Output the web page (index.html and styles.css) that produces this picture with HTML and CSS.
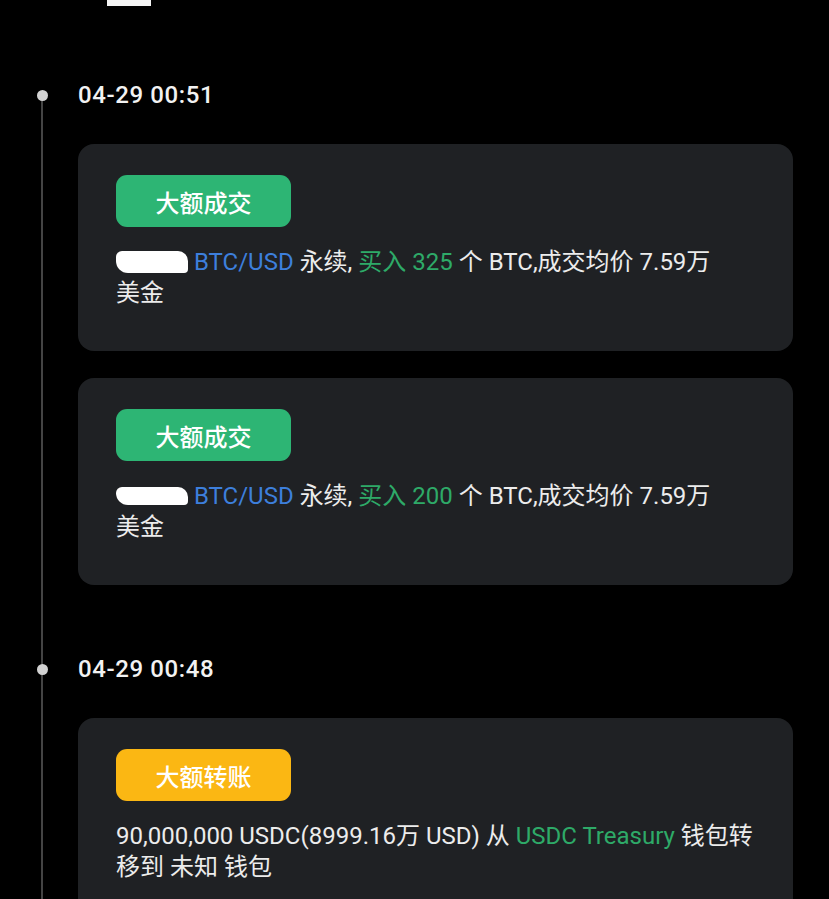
FILE: index.html
```html
<!DOCTYPE html>
<html lang="zh-CN">
<head>
<meta charset="utf-8">
<title>动态</title>
<link rel="stylesheet" href="styles.css">
</head>
<body>
<div class="tab-indicator"></div>
<div class="timeline">
  <section class="group">
    <div class="time-row"><span class="dot"></span><span class="time">04-29 00:51</span></div>
    <div class="card">
      <div class="badge badge-green">大额成交</div>
      <p class="msg"><span class="redact"></span> <span class="blue">BTC/USD</span> 永续, <span class="green">买入 325</span> 个 BTC,成交均价 7.59万 <span class="nowrap">美金</span></p>
    </div>
    <div class="card">
      <div class="badge badge-green">大额成交</div>
      <p class="msg"><span class="redact redact-b"></span> <span class="blue">BTC/USD</span> 永续, <span class="green">买入 200</span> 个 BTC,成交均价 7.59万 <span class="nowrap">美金</span></p>
    </div>
  </section>
  <section class="group">
    <div class="time-row"><span class="dot"></span><span class="time">04-29 00:48</span></div>
    <div class="card">
      <div class="badge badge-yellow">大额转账</div>
      <p class="msg">90,000,000 USDC(8999.16万 USD) 从 <span class="green">USDC Treasury</span> 钱包转移到 未知 钱包</p>
    </div>
  </section>
</div>
</body>
</html>
```
FILE: styles.css
```css
* { box-sizing: border-box; }
html, body { margin: 0; padding: 0; }
body {
  background: #000;
  color: #ececec;
  font-family: Roboto, "Noto Sans CJK SC", sans-serif;
  height: 899px;
  overflow: hidden;
}
.tab-indicator {
  width: 44px;
  height: 6px;
  margin-left: 107px;
  background: #f4f4f4;
}
.timeline {
  margin-top: 74px;
  background: linear-gradient(#444, #444) no-repeat 41px 15px / 2px 100%;
}
.group { padding-bottom: 69px; }
.time-row {
  display: flex;
  align-items: center;
  height: 30px;
}
.dot {
  width: 11px;
  height: 11px;
  border-radius: 50%;
  background: #d2d2d2;
  margin-left: 37px;
  margin-right: 30px;
  flex: none;
}
.time {
  font-size: 24px;
  font-weight: 500;
  color: #f2f2f2;
  letter-spacing: 0.6px;
}
.card {
  margin: 34px 36px 0 78px;
  background: #1f2124;
  border-radius: 16px;
  padding: 31px 38px 42px;
}
.card + .card { margin-top: 27px; }
.badge {
  width: 175px;
  height: 52px;
  border-radius: 11px;
  display: flex;
  align-items: center;
  justify-content: center;
  font-family: "Noto Sans CJK SC", sans-serif;
  font-size: 24px;
  font-weight: 500;
  color: #fff;
}
.badge-green { background: #2db574; }
.badge-yellow { background: #fbb713; }
.msg {
  margin: 20px 0 0;
  font-size: 24px;
  line-height: 31px;
}
.nowrap { white-space: nowrap; }
.blue { color: #3d7fdc; }
.green { color: #2eaa68; }
.redact {
  display: inline-block;
  width: 72px;
  height: 22px;
  vertical-align: -3px;
  background: #fff;
  border-radius: 6px 10px 4px 12px;
}
.redact-b { height: 18px; vertical-align: -1px; }
```
